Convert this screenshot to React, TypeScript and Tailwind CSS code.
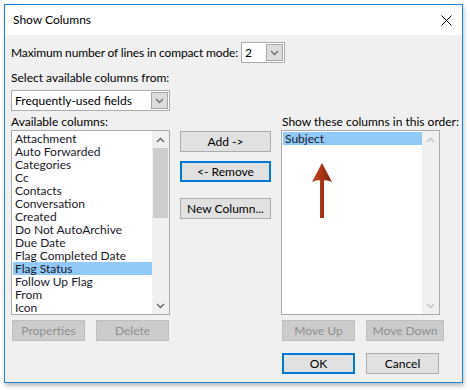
import React from "react";

const FONT = "font-['Lato',sans-serif]";

const available = [
  "Attachment",
  "Auto Forwarded",
  "Categories",
  "Cc",
  "Contacts",
  "Conversation",
  "Created",
  "Do Not AutoArchive",
  "Due Date",
  "Flag Completed Date",
  "Flag Status",
  "Follow Up Flag",
  "From",
  "Icon",
];

function Chevron({ up = false, color = "#606060" }: { up?: boolean; color?: string }) {
  return (
    <svg width="9" height="6" viewBox="0 0 9 6">
      <path
        d={up ? "M1 5 L4.5 1.5 L8 5" : "M1 1 L4.5 4.5 L8 1"}
        fill="none"
        stroke={color}
        strokeWidth="1.3"
      />
    </svg>
  );
}

function Combo({ width, value }: { width: string; value: string }) {
  return (
    <div className={`${width} h-[21px] border border-[#acacac] bg-white flex items-center justify-between pl-[3px] pr-[1px]`}>
      <span className="text-[12px] leading-none text-black">{value}</span>
      <div className="w-[17px] h-[17px] bg-[#dcdcdc] border border-[#a6a6a6] flex items-center justify-center">
        <Chevron color="#707070" />
      </div>
    </div>
  );
}

function Btn({
  label,
  width = "w-[73px]",
  disabled = false,
  focus = false,
}: {
  label: string;
  width?: string;
  disabled?: boolean;
  focus?: boolean;
}) {
  const tone = disabled
    ? "bg-[#cccccc] border border-[#bfbfbf] text-[#8f8f8f]"
    : focus
      ? "bg-[#e1e1e1] border-2 border-[#0078d7] text-black"
      : "bg-[#e1e1e1] border border-[#adadad] text-black";
  return (
    <div className={`${width} h-[21px] ${tone} flex items-center justify-center text-[12px] leading-none`}>
      {label}
    </div>
  );
}

function ScrollBar({ enabled }: { enabled: boolean }) {
  const arrow = enabled ? "#606060" : "#c0c0c0";
  return (
    <div className="w-[17px] h-full bg-[#f0f0f0] flex flex-col">
      <div className="h-[17px] flex items-center justify-center">
        <Chevron up color={arrow} />
      </div>
      <div className="flex-1 px-[1px]">
        {enabled && <div className="h-[70px] bg-[#cdcdcd]" />}
      </div>
      <div className="h-[17px] flex items-center justify-center">
        <Chevron color={arrow} />
      </div>
    </div>
  );
}

function ListBox({ items, selected }: { items: string[]; selected: string }) {
  return (
    <div className="w-[159px] h-[185px] border border-[#ababab] bg-white flex">
      <div className="flex-1 pt-[1px] pl-[1px] overflow-hidden">
        {items.map((it) => (
          <div
            key={it}
            className={`h-[13px] pl-[2px] text-[12px] leading-[13px] text-[#1a1a2a] whitespace-nowrap ${it === selected ? "bg-[#91c9f7]" : ""}`}
          >
            {it}
          </div>
        ))}
      </div>
      <ScrollBar enabled={items.length > 1} />
    </div>
  );
}

function RedArrow() {
  return (
    <svg className="absolute left-[28px] top-[32px]" width="26" height="60" viewBox="0 0 26 60">
      <defs>
        <linearGradient id="ar" x1="0" x2="1" y1="0" y2="0">
          <stop offset="0" stopColor="#c0461c" />
          <stop offset="0.5" stopColor="#a83515" />
          <stop offset="1" stopColor="#7e2610" />
        </linearGradient>
      </defs>
      <path
        d="M13 1 L23 20 Q18 17.5 15 18.5 L15 56 L11 56 L11 18.5 Q8 17.5 3 20 Z"
        fill="url(#ar)"
      />
    </svg>
  );
}

export default function App() {
  return (
    <div className={`w-[470px] h-[390px] bg-white pl-[4px] pt-[4px] ${FONT}`}>
      <div className="w-[459px] h-[379px] border border-[#1883d7] flex flex-col shadow-[1px_3px_4px_rgba(0,0,0,0.25)]">
        <div className="h-[30px] bg-white flex items-center justify-between pl-[8px] pr-[10px]">
          <span className="text-[12px] text-black">Show Columns</span>
          <svg width="11" height="11" viewBox="0 0 11 11">
            <path d="M0.5 0.5 L10.5 10.5 M10.5 0.5 L0.5 10.5" stroke="#000" strokeWidth="1" />
          </svg>
        </div>
        <div className="flex-1 bg-[#f0f0f0] pl-[6px] pt-[7px] text-[12px] text-black">
          <div className="flex items-center h-[21px]">
            <span className="w-[230px] whitespace-nowrap tracking-[-0.15px]">Maximum number of lines in compact mode:</span>
            <Combo width="w-[44px]" value="2" />
          </div>
          <div className="mt-[7px] h-[15px] leading-[15px]">Select available columns from:</div>
          <div className="mt-[5px]">
            <Combo width="w-[159px]" value="Frequently-used fields" />
          </div>
          <div className="mt-[3px] flex">
            <div className="w-[159px] flex flex-col">
              <div className="h-[16px] leading-[16px]">Available columns:</div>
              <ListBox items={available} selected="Flag Status" />
              <div className="mt-[5px] flex gap-[11px] pl-[1px]">
                <Btn label="Properties" disabled />
                <Btn label="Delete" disabled />
              </div>
            </div>
            <div className="ml-[10px] w-[91px] flex flex-col">
              <div className="mt-[17px]">
                <Btn label="Add ->" width="w-[91px]" />
              </div>
              <div className="mt-[9px]">
                <Btn label="<- Remove" width="w-[91px]" focus />
              </div>
              <div className="mt-[16px]">
                <Btn label="New Column..." width="w-[91px]" />
              </div>
            </div>
            <div className="ml-[10px] flex flex-col">
              <div className="h-[16px] leading-[16px] pl-[1px] whitespace-nowrap">Show these columns in this order:</div>
              <div className="relative">
                <ListBox items={["Subject"]} selected="Subject" />
                <RedArrow />
              </div>
              <div className="mt-[5px] flex gap-[11px] pl-[1px]">
                <Btn label="Move Up" disabled />
                <Btn label="Move Down" width="w-[78px]" disabled />
              </div>
              <div className="mt-[12px] flex gap-[11px] pl-[1px]">
                <Btn label="OK" focus />
                <Btn label="Cancel" />
              </div>
            </div>
          </div>
        </div>
      </div>
    </div>
  );
}
